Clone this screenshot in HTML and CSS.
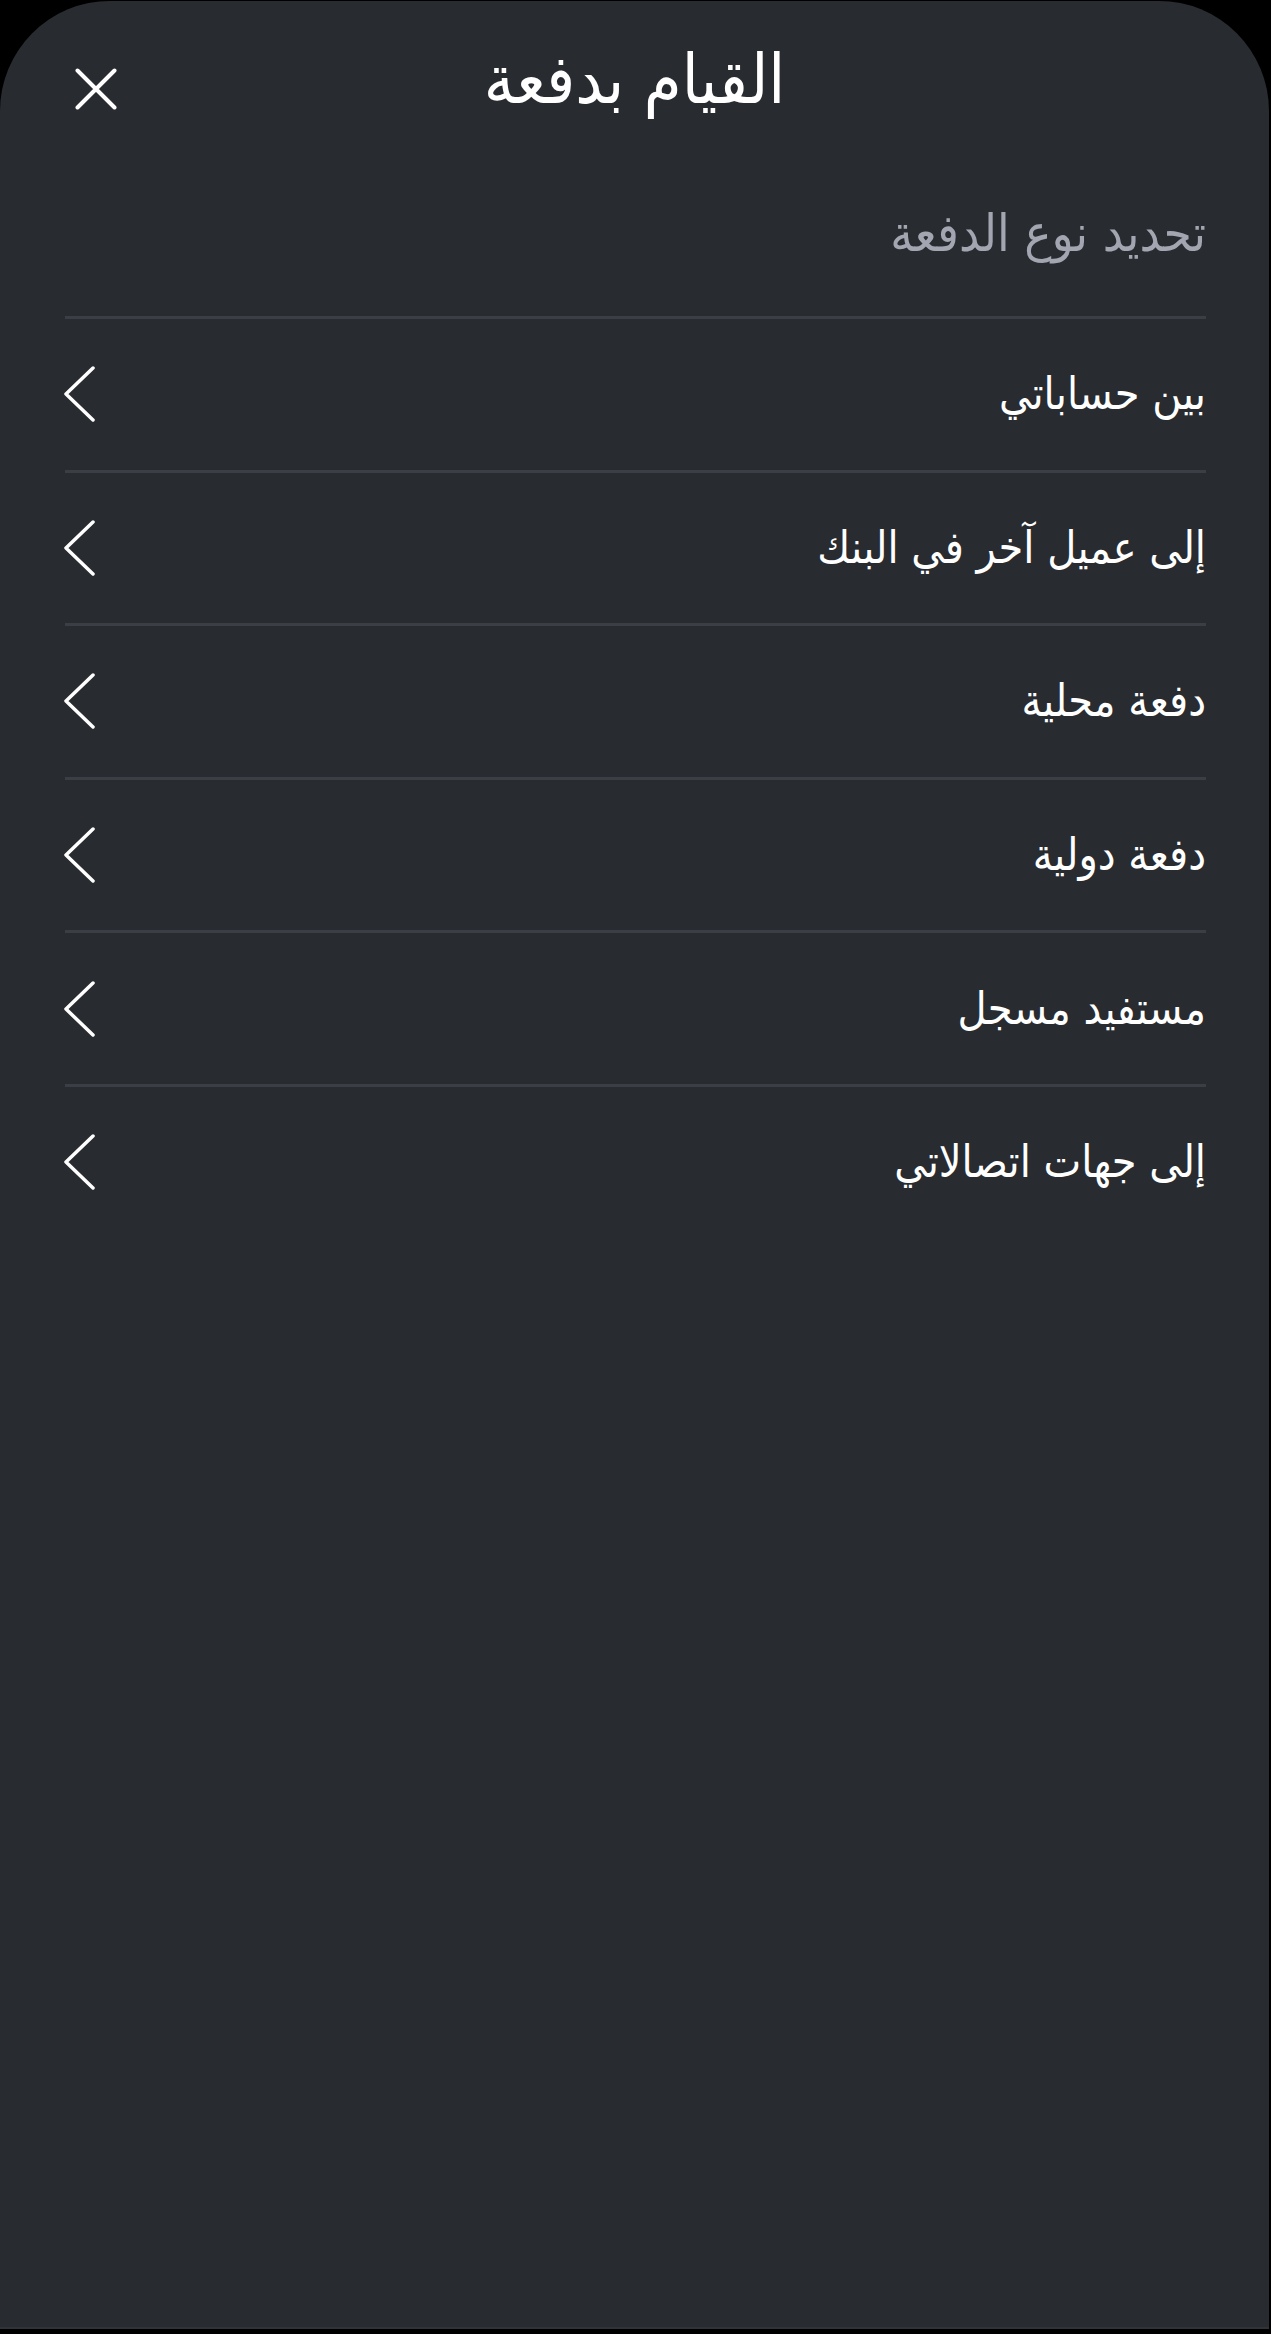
FILE: index.html
```html
<!DOCTYPE html>
<html lang="ar">
<head>
<meta charset="utf-8">
<title>القيام بدفعة</title>
<link rel="stylesheet" href="styles.css">
</head>
<body>
<div class="sheet">
  <header class="header">
    <button class="close" aria-label="إغلاق">
      <svg width="42" height="42" viewBox="0 0 42 42"><path d="M2.5 2.5 L39.5 39.5 M39.5 2.5 L2.5 39.5" stroke="#fff" stroke-width="4" stroke-linecap="round" fill="none"/></svg>
    </button>
    <h1 class="title" dir="rtl">القيام بدفعة</h1>
    <span class="spacer"></span>
  </header>
  <main class="content" dir="rtl">
    <p class="subtitle">تحديد نوع الدفعة</p>
    <ul class="list">
      <li class="row"><span class="label">بين حساباتي</span><svg class="chev" width="32" height="56" viewBox="0 0 32 56"><path d="M30 2 L3 28 L30 54" stroke="#fff" stroke-width="3.5" stroke-linecap="round" stroke-linejoin="round" fill="none"/></svg></li>
      <li class="row"><span class="label">إلى عميل آخر في البنك</span><svg class="chev" width="32" height="56" viewBox="0 0 32 56"><path d="M30 2 L3 28 L30 54" stroke="#fff" stroke-width="3.5" stroke-linecap="round" stroke-linejoin="round" fill="none"/></svg></li>
      <li class="row"><span class="label">دفعة محلية</span><svg class="chev" width="32" height="56" viewBox="0 0 32 56"><path d="M30 2 L3 28 L30 54" stroke="#fff" stroke-width="3.5" stroke-linecap="round" stroke-linejoin="round" fill="none"/></svg></li>
      <li class="row"><span class="label">دفعة دولية</span><svg class="chev" width="32" height="56" viewBox="0 0 32 56"><path d="M30 2 L3 28 L30 54" stroke="#fff" stroke-width="3.5" stroke-linecap="round" stroke-linejoin="round" fill="none"/></svg></li>
      <li class="row"><span class="label">مستفيد مسجل</span><svg class="chev" width="32" height="56" viewBox="0 0 32 56"><path d="M30 2 L3 28 L30 54" stroke="#fff" stroke-width="3.5" stroke-linecap="round" stroke-linejoin="round" fill="none"/></svg></li>
      <li class="row"><span class="label">إلى جهات اتصالاتي</span><svg class="chev" width="32" height="56" viewBox="0 0 32 56"><path d="M30 2 L3 28 L30 54" stroke="#fff" stroke-width="3.5" stroke-linecap="round" stroke-linejoin="round" fill="none"/></svg></li>
    </ul>
  </main>
</div>
</body>
</html>
```

FILE: styles.css
```css
html, body {
  margin: 0;
  padding: 0;
  background: #000;
}
body {
  font-family: "DejaVu Sans Condensed", "DejaVu Sans", sans-serif;
  color: #fff;
}
.sheet {
  box-sizing: border-box;
  margin-top: 1px;
  width: 1269px;
  height: 2328px;
  background: #282b30;
  border-radius: 110px 110px 0 0;
  border-bottom: 2px solid #303338;
}
.header {
  display: grid;
  grid-template-columns: 1fr auto 1fr;
  align-items: center;
  height: 176px;
}
.close {
  justify-self: start;
  margin-left: 75px;
  padding: 0;
  border: 0;
  background: none;
  display: flex;
}
.title {
  margin: 0 0 18px;
  font-size: 68px;
  font-weight: normal;
  line-height: 1.2;
}
.content {
  padding: 0 63px 0 65px;
}
.subtitle {
  margin: 0;
  padding: 23px 0 48px;
  font-size: 51px;
  line-height: 68px;
  color: #a3a6b1;
}
.list {
  list-style: none;
  margin: 0;
  padding: 0;
}
.row {
  display: flex;
  align-items: center;
  justify-content: space-between;
  height: 150.6px;
  border-top: 3px solid #3b3e44;
}
.label {
  font-size: 44.5px;
  line-height: 60px;
}
.chev {
  margin-left: -2px;
}
```
